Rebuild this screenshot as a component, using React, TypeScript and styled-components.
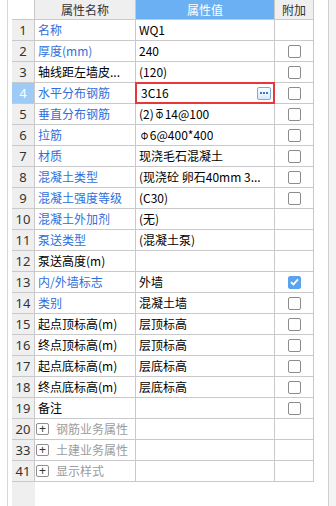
import React from 'react';
import styled, { createGlobalStyle } from 'styled-components';

type CheckState = 'none' | 'off' | 'on';

interface PropRow {
  n: number;
  name: string;
  value?: React.ReactNode;
  link?: boolean;
  check?: CheckState;
  group?: boolean;
  editing?: boolean;
}

const GRID = '#c9c9cc';
const COLS = '23px 101px 139px 39px';

const GlobalStyle = createGlobalStyle`
  html, body {
    margin: 0;
    padding: 0;
    background: #ffffff;
  }
  body {
    font-family: "Noto Sans CJK SC", "Noto Sans", sans-serif;
    font-size: 12px;
    color: #000000;
  }
`;

const Bar = ({ grade }: { grade: 1 | 3 }) => (
  <RebarMark $grade={grade}>Φ</RebarMark>
);

const rows: PropRow[] = [
  { n: 1, name: '名称', value: 'WQ1', link: true },
  { n: 2, name: '厚度(mm)', value: '240', link: true, check: 'off' },
  { n: 3, name: '轴线距左墙皮...', value: '(120)', check: 'off' },
  { n: 4, name: '水平分布钢筋', value: '3C16', link: true, check: 'off', editing: true },
  { n: 5, name: '垂直分布钢筋', value: <>(2)<Bar grade={3} />14@100</>, link: true, check: 'off' },
  { n: 6, name: '拉筋', value: <><Bar grade={1} />6@400*400</>, link: true, check: 'off' },
  { n: 7, name: '材质', value: '现浇毛石混凝土', link: true, check: 'off' },
  { n: 8, name: '混凝土类型', value: '(现浇砼 卵石40mm 3...', link: true, check: 'off' },
  { n: 9, name: '混凝土强度等级', value: '(C30)', link: true, check: 'off' },
  { n: 10, name: '混凝土外加剂', value: '(无)', link: true },
  { n: 11, name: '泵送类型', value: '(混凝土泵)', link: true },
  { n: 12, name: '泵送高度(m)', value: '' },
  { n: 13, name: '内/外墙标志', value: '外墙', link: true, check: 'on' },
  { n: 14, name: '类别', value: '混凝土墙', link: true, check: 'off' },
  { n: 15, name: '起点顶标高(m)', value: '层顶标高', check: 'off' },
  { n: 16, name: '终点顶标高(m)', value: '层顶标高', check: 'off' },
  { n: 17, name: '起点底标高(m)', value: '层底标高', check: 'off' },
  { n: 18, name: '终点底标高(m)', value: '层底标高', check: 'off' },
  { n: 19, name: '备注', value: '', check: 'off' },
  { n: 20, name: '钢筋业务属性', group: true },
  { n: 33, name: '土建业务属性', group: true },
  { n: 41, name: '显示样式', group: true },
];

export default function App() {
  return (
    <>
      <GlobalStyle />
      <Frame>
        <Gutter />
        <Sheet>
          <HeaderRow>
            <Corner />
            <HeadCell>属性名称</HeadCell>
            <HeadCell $active>属性值</HeadCell>
            <HeadCell>附加</HeadCell>
          </HeaderRow>

          {rows.map(row => (
            <Row key={row.n}>
              <NumCell $selected={row.editing}>{row.n}</NumCell>
              <NameCell $link={row.link} $group={row.group}>
                {row.group && <Expander>+</Expander>}
                <Label>{row.name}</Label>
              </NameCell>
              <ValueCell>
                {row.editing ? (
                  <Editor>
                    <EditText>{row.value}</EditText>
                    <MoreButton>
                      <Dot /><Dot /><Dot />
                    </MoreButton>
                  </Editor>
                ) : (
                  <Label>{row.value}</Label>
                )}
              </ValueCell>
              <CheckCell>
                {row.check && row.check !== 'none' && (
                  <CheckBox $checked={row.check === 'on'}>
                    {row.check === 'on' && (
                      <svg width="9" height="8" viewBox="0 0 9 8">
                        <path d="M1 4.2 L3.4 6.4 L8 1.4" fill="none" stroke="#ffffff" strokeWidth="1.8" />
                      </svg>
                    )}
                  </CheckBox>
                )}
              </CheckCell>
            </Row>
          ))}

          <Filler>
            <FillerNum />
          </Filler>
        </Sheet>
        <Blank />
        <Scrollbar />
      </Frame>
    </>
  );
}

const Frame = styled.div`
  display: flex;
  width: 336px;
  height: 506px;
  overflow: hidden;
  background: #ffffff;
`;

const Gutter = styled.div`
  width: 7px;
  border-right: 1px solid #d6d6d6;
  margin-right: 4px;
  flex-shrink: 0;
`;

const Sheet = styled.div`
  width: 302px;
  flex-shrink: 0;
  display: flex;
  flex-direction: column;
`;

const HeaderRow = styled.div`
  display: grid;
  grid-template-columns: ${COLS};
  height: 20px;
`;

const Corner = styled.div`
  border-bottom: 1px solid ${GRID};
  border-right: 1px solid ${GRID};
  background: #ffffff;
`;

const HeadCell = styled.div<{ $active?: boolean }>`
  display: flex;
  align-items: center;
  justify-content: center;
  border-bottom: 1px solid ${GRID};
  border-right: 1px solid ${GRID};
  background: ${p => (p.$active ? '#6cb0f4' : '#efefef')};
  color: ${p => (p.$active ? '#ffffff' : '#333333')};
  line-height: 19px;
`;

const Row = styled.div`
  display: grid;
  grid-template-columns: ${COLS};
  height: 21px;
`;

const Cell = styled.div`
  box-sizing: border-box;
  border-right: 1px solid ${GRID};
  border-bottom: 1px solid ${GRID};
  display: flex;
  align-items: center;
  min-width: 0;
  line-height: 20px;
`;

const NumCell = styled(Cell)<{ $selected?: boolean }>`
  justify-content: center;
  background: ${p => (p.$selected ? '#9ecbf6' : '#efefef')};
  color: ${p => (p.$selected ? '#ffffff' : '#333333')};
  font-family: "Noto Sans", sans-serif;
  font-size: 13px;
`;

const NameCell = styled(Cell)<{ $link?: boolean; $group?: boolean }>`
  padding-left: ${p => (p.$group ? '1px' : '3px')};
  color: ${p => (p.$group ? '#9c9c9c' : p.$link ? '#2f6fdc' : '#000000')};
  gap: 7px;
`;

const ValueCell = styled(Cell)`
  position: relative;
  padding-left: 3px;
`;

const CheckCell = styled(Cell)`
  justify-content: center;
`;

const Label = styled.span`
  white-space: nowrap;
  overflow: hidden;
  min-width: 0;
`;

const Expander = styled.span`
  flex-shrink: 0;
  width: 11px;
  height: 10px;
  border: 1px solid #8f8f8f;
  border-radius: 2px;
  display: flex;
  align-items: center;
  justify-content: center;
  color: #333333;
  font-family: "Liberation Sans", sans-serif;
  font-size: 12px;
  line-height: 10px;
`;

const Editor = styled.div`
  position: absolute;
  left: -1px;
  top: -1px;
  right: -1px;
  bottom: -1px;
  border: 2px solid #e8363a;
  display: flex;
  align-items: center;
  padding-left: 4px;
  padding-right: 2px;
`;

const EditText = styled.span`
  flex: 1;
`;

const MoreButton = styled.span`
  width: 12px;
  height: 11px;
  border: 1px solid #7fa8d6;
  border-radius: 2px;
  background: linear-gradient(#fbfdff, #dce9f8);
  display: flex;
  align-items: center;
  justify-content: center;
  gap: 1px;
`;

const Dot = styled.span`
  width: 2px;
  height: 2px;
  background: #3b78c6;
`;

const CheckBox = styled.span<{ $checked?: boolean }>`
  box-sizing: border-box;
  width: 13px;
  height: 13px;
  border-radius: 2px;
  border: 1px solid ${p => (p.$checked ? '#5aa3f0' : '#8c8c8c')};
  background: ${p => (p.$checked ? '#5aa3f0' : '#ffffff')};
  display: flex;
  align-items: center;
  justify-content: center;
`;

const RebarMark = styled.span<{ $grade: 1 | 3 }>`
  position: relative;
  display: inline-block;
  font-size: 11px;
  transform: scaleX(0.85);
  margin: 0 1px;

  &::before {
    content: '';
    display: ${p => (p.$grade === 3 ? 'block' : 'none')};
    position: absolute;
    left: 1px;
    right: 1px;
    top: 5px;
    height: 1px;
    background: #000000;
  }
`;

const Filler = styled.div`
  flex: 1;
  display: flex;
`;

const FillerNum = styled.div`
  width: 23px;
  background: #efefef;
`;

const Blank = styled.div`
  flex: 1;
`;

const Scrollbar = styled.div`
  width: 7px;
  border-left: 1px solid #d0d0d0;
  background: #f4f4f4;
  flex-shrink: 0;
`;
